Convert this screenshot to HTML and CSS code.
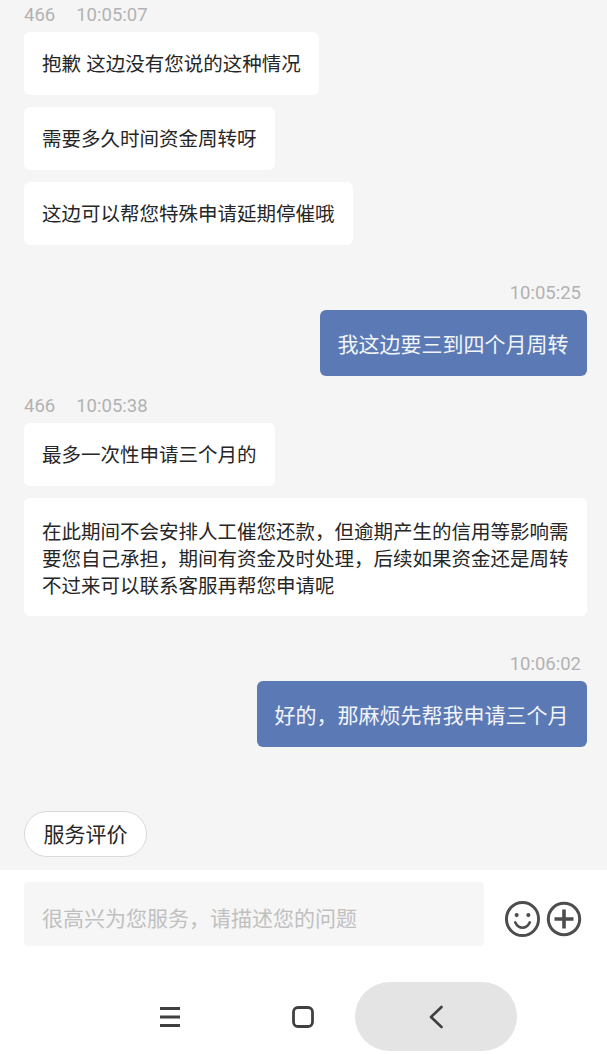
FILE: index.html
```html
<!DOCTYPE html>
<html lang="zh-CN">
<head>
<meta charset="utf-8">
<title>客服</title>
<link rel="stylesheet" href="styles.css">
</head>
<body>
<div class="app">
  <main class="chat">
    <section class="group group-first">
      <div class="meta"><span class="name">466</span><span>10:05:07</span></div>
      <div class="bubble">抱歉 这边没有您说的这种情况</div>
      <div class="bubble">需要多久时间资金周转呀</div>
      <div class="bubble">这边可以帮您特殊申请延期停催哦</div>
    </section>
    <section class="group group-me group-a">
      <div class="meta">10:05:25</div>
      <div class="bubble-me">我这边要三到四个月周转</div>
    </section>
    <section class="group group-b">
      <div class="meta"><span class="name">466</span><span>10:05:38</span></div>
      <div class="bubble">最多一次性申请三个月的</div>
      <div class="bubble bubble-long">在此期间不会安排人工催您还款，但逾期产生的信用等影响需要您自己承担，期间有资金及时处理，后续如果资金还是周转不过来可以联系客服再帮您申请呢</div>
    </section>
    <section class="group group-me group-c">
      <div class="meta">10:06:02</div>
      <div class="bubble-me">好的，那麻烦先帮我申请三个月</div>
    </section>
    <div class="pill">服务评价</div>
  </main>
  <section class="composer">
    <div class="input">很高兴为您服务，请描述您的问题</div>
    <div class="tools">
      <svg class="icon-smile" viewBox="0 0 38 38" aria-hidden="true">
        <ellipse cx="19" cy="19" rx="16.5" ry="17" fill="none" stroke="#4d4d4d" stroke-width="3"/>
        <circle cx="13" cy="15" r="2.1" fill="#4d4d4d"/>
        <circle cx="25" cy="15" r="2.1" fill="#4d4d4d"/>
        <path d="M11.5 22.5c2 4 4.600 5.500 7.500 5.500s5.500-1.500 7.500-5.500" fill="none" stroke="#4d4d4d" stroke-width="2.600" stroke-linecap="round"/>
      </svg>
      <svg class="icon-plus" viewBox="0 0 36 36" aria-hidden="true">
        <circle cx="18" cy="18" r="15.700" fill="none" stroke="#4d4d4d" stroke-width="3"/>
        <path d="M18 8.500v19M8.500 18h19" fill="none" stroke="#4d4d4d" stroke-width="3.600"/>
      </svg>
    </div>
  </section>
  <nav class="navbar">
    <div class="nav-slot">
      <svg class="icon-menu" viewBox="0 0 22 22" aria-hidden="true">
        <path d="M1 2.500h20M1 11h20M1 19.500h20" fill="none" stroke="#404040" stroke-width="2.800"/>
      </svg>
    </div>
    <div class="nav-slot">
      <svg class="icon-home" viewBox="0 0 22 22" aria-hidden="true">
        <rect x="1.500" y="1.500" width="19" height="19" rx="4.500" fill="none" stroke="#404040" stroke-width="2.800"/>
      </svg>
    </div>
    <div class="nav-back">
      <svg class="icon-back" viewBox="0 0 14 24" aria-hidden="true">
        <path d="M12.500 2L2 12l10.500 10" fill="none" stroke="#404040" stroke-width="2.600" stroke-linecap="round" stroke-linejoin="round"/>
      </svg>
    </div>
  </nav>
</div>
</body>
</html>
```
FILE: styles.css
```css
* { box-sizing: border-box; }
html, body { margin: 0; padding: 0; }
body {
  width: 607px;
  height: 1054px;
  overflow: hidden;
  background: #fff;
  font-family: "Noto Sans CJK SC", "Noto Sans", sans-serif;
}
.app { display: flex; flex-direction: column; height: 1054px; }
.chat {
  height: 870px;
  background: #f5f5f5;
  padding: 0 20.500px 0 24px;
  display: flex;
  flex-direction: column;
  align-items: stretch;
}
.group { display: flex; flex-direction: column; align-items: flex-start; }
.group-first { margin-top: 4px; }
.group-a { margin-top: 37px; }
.group-b { margin-top: 19px; }
.group-c { margin-top: 37px; }
.group-me { align-items: flex-end; }
.meta {
  height: 22px;
  line-height: 22px;
  margin-bottom: 6px;
  color: #b2b2b2;
  font-family: Roboto, "Noto Sans", sans-serif;
  font-size: 18.500px;
  display: flex;
  gap: 21px;
}
.group-me .meta { margin-right: 5.500px; }
.bubble {
  background: #fff;
  color: #262626;
  font-size: 19.500px;
  line-height: 28px;
  padding: 17px 18px 18px;
  border-radius: 6px;
  margin-bottom: 12px;
  word-spacing: 1px;
}
.group .bubble:last-child { margin-bottom: 0; }
.bubble-long { padding: 19px 18px 18px; line-height: 27px; }
.bubble-me {
  background: #5b7ab5;
  color: #f2f5fa;
  font-size: 21px;
  line-height: 30px;
  padding: 18px 18px;
  border-radius: 6px;
}
.pill {
  align-self: flex-start;
  margin-top: 64px;
  width: 123px;
  height: 46px;
  padding-bottom: 3px;
  border: 1px solid #d9d9d9;
  border-radius: 23px;
  background: #fff;
  color: #262626;
  font-size: 21px;
  display: flex;
  align-items: center;
  justify-content: center;
}
.composer {
  height: 100px;
  padding: 12px 24px 0;
  display: flex;
  align-items: flex-start;
  background: #fff;
}
.input {
  width: 460px;
  height: 64px;
  background: #f6f6f6;
  border-radius: 4px;
  padding: 5px 18px 0;
  display: flex;
  align-items: center;
  color: #c0c0c0;
  font-size: 21px;
}
.tools {
  display: flex;
  align-items: center;
  gap: 5px;
  margin-left: 20px;
  margin-top: 18px;
}
.icon-smile { width: 37px; height: 38px; display: block; }
.icon-plus { width: 36px; height: 36px; display: block; }
.navbar {
  flex: 1;
  display: flex;
  align-items: flex-start;
  padding: 12px 0 0 0;
}
.nav-slot {
  height: 69px;
  display: flex;
  align-items: center;
  justify-content: center;
}
.nav-slot:nth-child(1) { width: 170px; margin-left: 85px; }
.nav-slot:nth-child(2) { width: 96px; }
.icon-menu { width: 22px; height: 22px; display: block; }
.icon-home { width: 22px; height: 22px; display: block; }
.nav-back {
  width: 162px;
  height: 69px;
  margin-left: 4px;
  border-radius: 35px;
  background: #e4e4e4;
  display: flex;
  align-items: center;
  justify-content: center;
}
.icon-back { width: 14px; height: 24px; display: block; }
```
